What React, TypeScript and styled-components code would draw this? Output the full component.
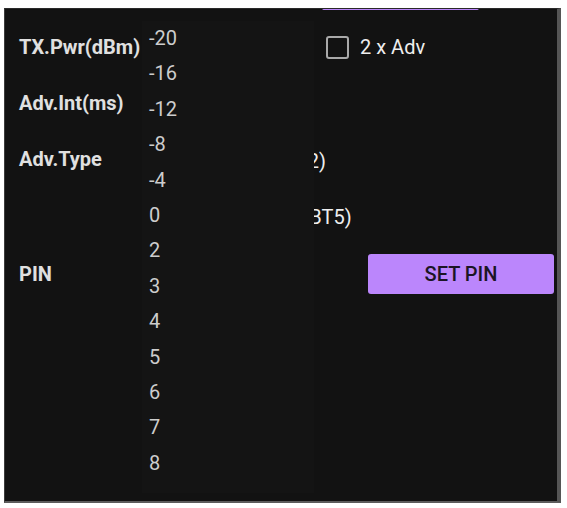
import React from "react";
import styled, { createGlobalStyle } from "styled-components";

const GlobalStyle = createGlobalStyle`
  body {
    margin: 0;
    background: #ffffff;
    font-family: Roboto, "Noto Sans", sans-serif;
  }
`;

const Panel = styled.div`
  position: relative;
  box-sizing: border-box;
  margin: 8px 0 0 4px;
  width: 557px;
  height: 495px;
  background: #121212;
  border-top: 1px solid #2a2a2a;
  border-left: 1px solid #3c3c3c;
  border-right: 4px solid #555;
  border-bottom: 2px solid #5c5c5c;
  overflow: hidden;
`;

const ButtonStub = styled.div`
  margin-left: 317px;
  width: 157px;
  height: 2px;
  margin-top: -1px;
  background: #bb86fc;
  border-radius: 0 0 3px 3px;
`;

const Form = styled.div`
  padding: 9px 0 0 14px;
  display: flex;
  flex-direction: column;
`;

const Row = styled.div<{ $h: number; $top?: boolean }>`
  display: flex;
  align-items: ${(p) => (p.$top ? "flex-start" : "center")};
  height: ${(p) => p.$h}px;
`;

const Label = styled.div<{ $pad?: number }>`
  width: 126px;
  flex: none;
  color: #e0e0e0;
  font-weight: 700;
  font-size: 20px;
  white-space: nowrap;
  padding-top: ${(p) => p.$pad ?? 0}px;
`;

// spinner / edit boxes sit under the open drop-down, nothing of them shows
const Field = styled.div<{ $w: number }>`
  width: ${(p) => p.$w}px;
  height: 40px;
  flex: none;
`;

const CheckLabel = styled.label`
  display: flex;
  align-items: center;
  gap: 11px;
  color: #eee;
  font-size: 20px;
`;

const Box = styled.span`
  width: 19px;
  height: 19px;
  border: 2px solid #a9a9a9;
  border-radius: 3px;
`;

const RadioGroup = styled.div`
  display: flex;
  flex-direction: column;
  padding-top: 2px;
`;

const RadioOption = styled.div`
  display: flex;
  align-items: center;
  height: 56px;
  gap: 12px;
  padding-left: 13px;
  color: #eee;
  font-size: 20px;
`;

const Circle = styled.span`
  width: 18px;
  height: 18px;
  border-radius: 50%;
  border: 2px solid #bb86fc;
`;

const SetPin = styled.button`
  margin-left: 35px;
  width: 186px;
  height: 40px;
  border: none;
  border-radius: 3px;
  background: #bb86fc;
  color: #1c1525;
  font-family: Roboto, sans-serif;
  font-size: 20px;
  font-weight: 500;
`;

const Popup = styled.ul`
  position: absolute;
  left: 137px;
  top: 12px;
  width: 172px;
  margin: 0;
  padding: 0 0 12px;
  list-style: none;
  background: #141414;
`;

const Item = styled.li`
  height: 35.4px;
  line-height: 35.4px;
  padding-left: 7px;
  color: #cdcdcd;
  font-size: 20px;
`;

const powers = ["-20", "-16", "-12", "-8", "-4", "0", "2", "3", "4", "5", "6", "7", "8"];

export default function App() {
  return (
    <>
      <GlobalStyle />
      <Panel>
        <ButtonStub />
        <Form>
          <Row $h={56}>
            <Label>TX.Pwr(dBm)</Label>
            <Field $w={181} />
            <CheckLabel>
              <Box />
              2 x Adv
            </CheckLabel>
          </Row>
          <Row $h={56}>
            <Label>Adv.Int(ms)</Label>
            <Field $w={150} />
          </Row>
          <Row $h={112} $top>
            <Label $pad={16}>Adv.Type</Label>
            <RadioGroup>
              <RadioOption>
                <Circle />
                Legacy (BT4.2)
              </RadioOption>
              <RadioOption>
                <Circle />
                Long Range (BT5)
              </RadioOption>
            </RadioGroup>
          </Row>
          <Row $h={62}>
            <Label>PIN</Label>
            <Field $w={188} />
            <SetPin>SET PIN</SetPin>
          </Row>
        </Form>
        <Popup>
          {powers.map((p) => (
            <Item key={p}>{p}</Item>
          ))}
        </Popup>
      </Panel>
    </>
  );
}
